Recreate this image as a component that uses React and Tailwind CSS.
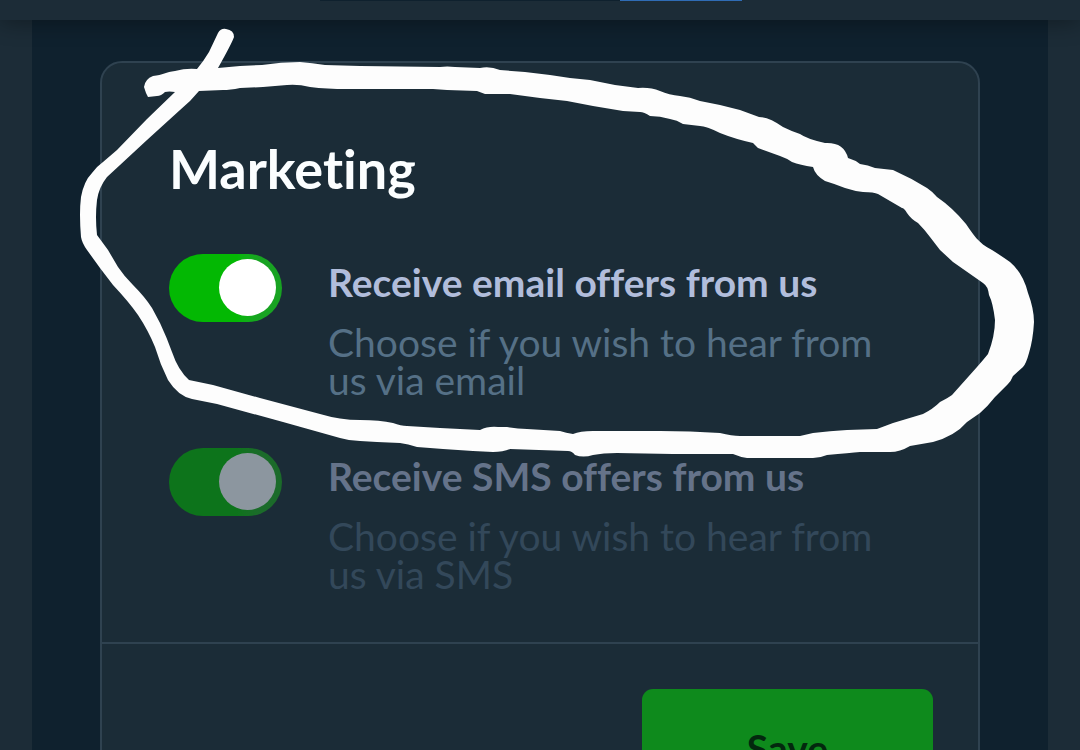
import React, { useState } from "react";

const settings = [
  {
    id: "email",
    title: "Receive email offers from us",
    description: "Choose if you wish to hear from us via email",
    muted: false,
  },
  {
    id: "sms",
    title: "Receive SMS offers from us",
    description: "Choose if you wish to hear from us via SMS",
    muted: true,
  },
];

const SettingRow = ({ id, title, description, muted, checked, onChange }) => {
  return (
    <div className="flex items-start gap-[46px]">
      <input
        id={id}
        type="checkbox"
        role="switch"
        checked={checked}
        onChange={onChange}
        className={`flex h-[68px] w-[113px] shrink-0 cursor-pointer appearance-none items-start rounded-full px-1.5 pt-[5px] before:block before:size-[57px] before:rounded-full before:content-[''] checked:justify-end ${
          muted
            ? "bg-[#33475a] before:bg-[#8c969f] checked:bg-linear-to-r checked:from-[#0d741b] checked:from-60% checked:to-[#1b6b2a] checked:to-80%"
            : "bg-[#557086] before:bg-white checked:bg-linear-to-r checked:from-[#03b803] checked:from-60% checked:to-[#18a322] checked:to-80%"
        }`}
      />
      <div className="flex-1 pt-[3px]">
        <label
          htmlFor={id}
          className={`block text-[39px] leading-[50px] font-bold ${
            muted ? "text-[#65738a]" : "text-[#b1bddb]"
          }`}
        >
          {title}
        </label>
        <p
          className={`pt-4 text-[39px] leading-[38px] ${
            muted ? "text-[#33485a]" : "text-[#557086]"
          }`}
        >
          {description}
        </p>
      </div>
    </div>
  );
};

// Hand-drawn marker loop around the first setting
const MarkerLoop = () => (
  <svg
    viewBox="0 0 1080 750"
    className="pointer-events-none absolute top-0 left-0 z-20 w-full"
    aria-hidden="true"
  >
    <path
      fill="#fdfdfd"
      fillRule="evenodd"
      d="M144 87Q145 79 153 76C163 75 166 72 175 71Q186 68 197 69Q203 62 209 52L218 33Q221 28 226 29Q234 30 234 37Q232 43 218 68L240 66L262 65Q281 62 300 62Q312 63 325 65L360 66L440 67Q447 66 455 67L480 68Q490 66 500 70L525 72L550 75L570 78L590 80L615 85L638 88Q650 87 660 91Q669 95 680 96Q690 97 700 101L720 105L740 110L759 117Q769 117 783 127Q791 131 800 134Q807 139 825 143Q844 142 848 158Q855 160 860 164Q868 165 875 168Q884 169 893 170Q911 178 927 188Q933 192 937 197Q953 208 966 224C973 234 978 243 992 250Q1000 255 1010 262Q1023 273 1028 293Q1034 309 1034 322Q1033 340 1029 353Q1026 364 1023 367L1013 376Q1011 381 1008 384L995 397Q988 406 980 413L967 422Q955 436 933 442L910 446Q900 452 890 452L860 452Q850 453 827 455Q820 458 813 458L747 458Q740 457 733 454L673 454L617 453Q603 453 593 455Q583 458 575 455Q572 451 568 451L510 449Q503 452 493 452L473 451L443 449L417 447Q408 444 400 443L377 442L360 441Q350 441 340 438L283 422L217 404L192 399Q178 396 168 380Q160 364 155 347Q148 330 138 315Q129 302 113 285L100 268L87 250Q82 243 81 237Q79 213 81 197Q84 181 92 173Q96 167 103 162L117 150L147 119L175 92Q169 91 165 92Q161 96 157 96L148 97Q147 95 146 93ZM199 91L190 101L180 110L147 140L120 165L107 177Q99 187 97 200Q95 217 97 235L108 250L118 267Q124 276 133 285Q145 297 152 308L160 323Q167 338 172 352Q178 370 189 380L213 385L260 398L320 414Q340 420 360 420Q380 420 393 423Q401 426 407 426L440 428L480 430Q488 426 498 427L507 427Q518 429 527 429L560 431Q566 433 573 434Q580 431 593 431L660 431Q690 431 720 433Q732 436 740 436L800 436L813 433Q830 431 847 430L877 429Q885 426 893 423L923 414Q933 409 940 402Q948 398 952 395L977 367Q984 359 988 354Q995 336 995 320Q993 303 989 295Q988 286 983 283L953 262L940 250L930 237Q924 229 918 223Q911 219 907 213Q904 208 902 208L878 194Q874 192 863 192Q854 191 845 188Q835 184 825 181Q815 175 813 167Q800 165 792 162Q786 158 780 156L758 148L753 143Q735 139 720 133Q706 126 700 126L683 124Q677 120 670 119Q660 116 650 116Q644 112 640 112L623 111L593 106L567 101L540 98L510 94L485 94L477 91L447 90L433 89L360 89L347 89Q327 89 310 87Q298 84 287 85Q275 86 263 87L240 88Q230 90 223 90Z"
    />
  </svg>
);

const App = () => {
  const [enabled, setEnabled] = useState({ email: true, sms: true });

  const toggle = (id) => setEnabled({ ...enabled, [id]: !enabled[id] });

  return (
    <div className="relative flex h-screen flex-col overflow-hidden bg-[#1c2c37] font-['Lato',sans-serif] [font-variant-ligatures:none]">
      {/* Header */}
      <header className="relative z-10 flex h-5 shrink-0 items-start bg-[#1c2c37] pl-80 shadow-[0_0_24px_rgba(0,0,0,0.45)]">
        <div className="h-px w-[300px] bg-[#0f212e]" />
        <div className="h-px w-[122px] bg-[#2f6cb5]" />
      </header>

      <main className="mx-8 bg-[#0f212e] px-[68px] pt-[41px] pb-10">
        <section className="rounded-[22px] border-2 border-[#2f4250] bg-[#1b2c37]">
          <div className="px-[67px] pt-[72px] pb-[49px]">
            <h2 className="text-[54px] leading-[68px] font-bold text-[#fbfeff]">
              Marketing
            </h2>
            <div className="flex flex-col gap-[49px] pt-[51px] pr-4">
              {settings.map((item) => (
                <SettingRow
                  key={item.id}
                  {...item}
                  checked={enabled[item.id]}
                  onChange={() => toggle(item.id)}
                />
              ))}
            </div>
          </div>

          {/* Footer */}
          <div className="flex justify-end border-t-2 border-[#2f4250] px-[45px] py-[45px]">
            <button
              type="button"
              className="h-[118px] w-[291px] rounded-[11px] bg-[#0e8a1c] text-[39px] font-bold text-[#03280e]"
            >
              Save
            </button>
          </div>
        </section>
      </main>

      <MarkerLoop />
    </div>
  );
};

export default App;
